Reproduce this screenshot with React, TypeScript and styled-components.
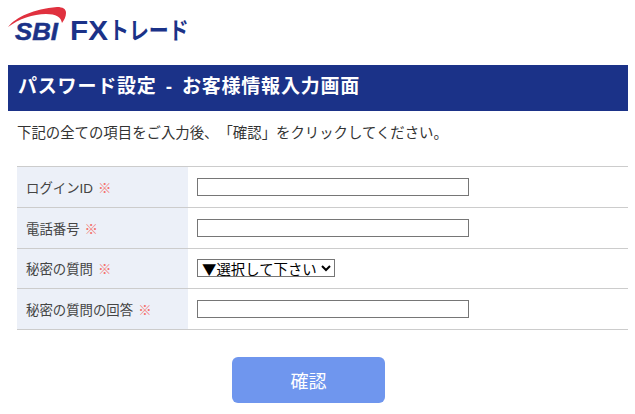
import styled, { createGlobalStyle } from "styled-components";

const GlobalStyle = createGlobalStyle`
  html, body {
    margin: 0;
    padding: 0;
    background: #fff;
  }
  body {
    font-family: "Liberation Sans", "Noto Sans CJK JP", sans-serif;
    color: #333;
    font-size: 14px;
    text-spacing-trim: space-all;
  }
`;

const Page = styled.div`
  width: 635px;
  height: 414px;
  padding: 0 7px 0 8px;
  box-sizing: border-box;
  overflow: hidden;
`;

const LogoBar = styled.div`
  height: 65px;
  display: flex;
  align-items: flex-start;
`;

const Title = styled.h1`
  margin: 0;
  height: 46px;
  line-height: 44px;
  padding-left: 10px;
  background: #1b3288;
  color: #fff;
  font-size: 19px;
  font-weight: bold;
  letter-spacing: 0.8px;
  word-spacing: 3px;
  white-space: nowrap;
`;

const Content = styled.div`
  padding: 0 0 0 9px;
`;

const Lead = styled.p`
  margin: 0;
  padding-top: 12px;
  height: 43px;
  line-height: 20px;
  font-size: 14.4px;
  color: #333;
  white-space: nowrap;
`;

const Fields = styled.div`
  border-top: 1px solid #ccc;
`;

const Row = styled.div`
  display: grid;
  grid-template-columns: 171px 1fr;
  height: 39.75px;
  border-bottom: 1px solid #ccc;
`;

const Label = styled.label`
  display: flex;
  align-items: center;
  padding-left: 9px;
  background: #ecf0f8;
  font-size: 13.4px;
  color: #444;
`;

const Required = styled.span`
  margin-left: 5px;
  color: #f4706c;
  font-size: 13.4px;
`;

const Cell = styled.div`
  display: flex;
  align-items: center;
  padding-left: 9px;
`;

const TextInput = styled.input`
  width: 272px;
  height: 18px;
  box-sizing: border-box;
  padding: 1px 2px;
  border: 1px solid #767676;
  background: #fff;
  border-radius: 0;
  outline: none;
`;

const Select = styled.select`
  width: 138px;
  height: 18px;
  box-sizing: border-box;
  border: 1px solid #767676;
  border-radius: 0;
  background-color: #fff;
  color: #000;
  font-family: "Lato", "Noto Sans CJK JP", sans-serif;
  font-size: 14.4px;
  padding: 0;
`;

const Actions = styled.div`
  display: flex;
  justify-content: center;
  padding: 27px 28px 0 0;
`;

const Submit = styled.button`
  width: 153px;
  height: 46px;
  border: none;
  border-radius: 6px;
  background: #6f96ee;
  color: #fff;
  font-family: "Liberation Sans", "Noto Sans CJK JP", sans-serif;
  font-size: 18px;
  cursor: pointer;
`;

const Logo = () => (
  <svg width="200" height="60" viewBox="0 0 200 60" style={{ marginLeft: -8 }}>
    <path
      d="M8 27 C16 17 34 9 57 7 C63 7 66 9 66 13 C66 17 64 20 62 23 C61 17 56 14 46 14 C33 14 19 19 8 27 Z"
      fill="#e0313f"
    />
    <text
      x="15"
      y="40"
      fontFamily="Liberation Sans, sans-serif"
      fontSize="24"
      fontWeight="bold"
      fontStyle="italic"
      fill="#1b3288"
      stroke="#1b3288"
      strokeWidth="0.5"
      textLength="43"
      lengthAdjust="spacingAndGlyphs"
    >
      SBI
    </text>
    <text
      x="70"
      y="40"
      fontFamily="Liberation Sans, sans-serif"
      fontSize="27"
      fontWeight="bold"
      fill="#1b3288"
      textLength="38"
      lengthAdjust="spacingAndGlyphs"
    >
      FX
    </text>
    <text
      transform="translate(109 39) scale(0.83 1)"
      fontFamily="Noto Sans CJK JP, sans-serif"
      fontSize="24"
      fontWeight="bold"
      fill="#1b3288"
    >
      トレード
    </text>
  </svg>
);

const fields = [
  { id: "loginId", label: "ログインID" },
  { id: "tel", label: "電話番号" },
  { id: "question", label: "秘密の質問", select: true },
  { id: "answer", label: "秘密の質問の回答" },
];

export default function App() {
  return (
    <>
      <GlobalStyle />
      <Page>
        <LogoBar>
          <Logo />
        </LogoBar>
        <Title>パスワード設定 - お客様情報入力画面</Title>
        <Content>
          <Lead>下記の全ての項目をご入力後、「確認」をクリックしてください。</Lead>
          <Fields>
            {fields.map((f) => (
              <Row key={f.id}>
                <Label htmlFor={f.id}>
                  {f.label}
                  <Required>※</Required>
                </Label>
                <Cell>
                  {f.select ? (
                    <Select id={f.id}>
                      <option>▼選択して下さい</option>
                    </Select>
                  ) : (
                    <TextInput id={f.id} type="text" />
                  )}
                </Cell>
              </Row>
            ))}
          </Fields>
          <Actions>
            <Submit type="button">確認</Submit>
          </Actions>
        </Content>
      </Page>
    </>
  );
}
